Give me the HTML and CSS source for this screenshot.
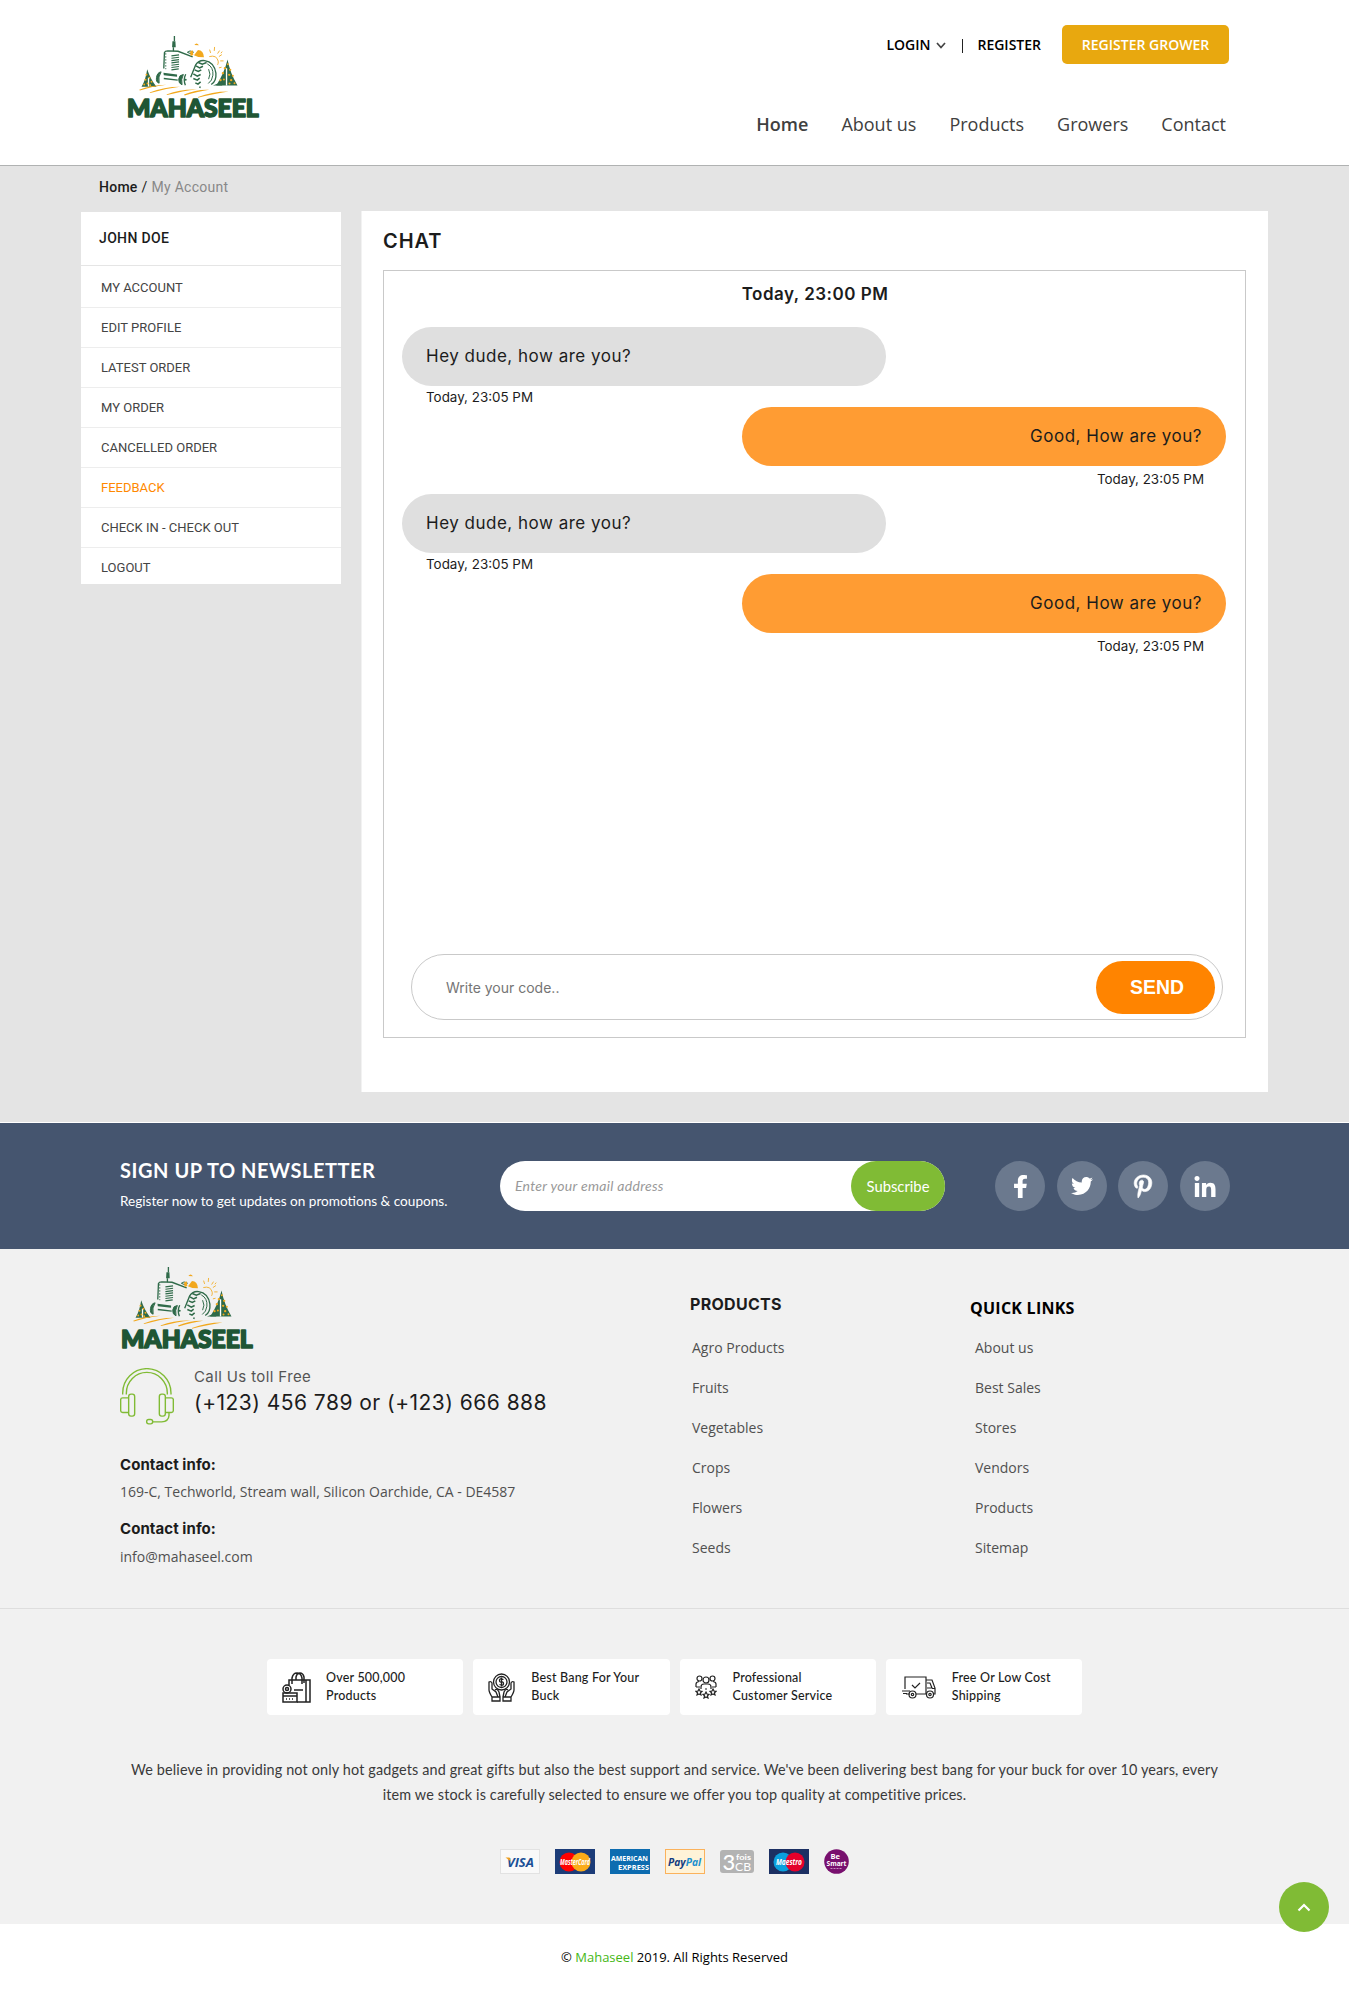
FILE: index.html
```html
<!DOCTYPE html>
<html lang="en">
<head>
<meta charset="utf-8">
<title>Mahaseel - Chat</title>
<link rel="stylesheet" href="styles.css">
</head>
<body>
<svg class="sprite" aria-hidden="true">
  <symbol id="logo" viewBox="168 108 402 250">
    <g fill="none" stroke="#2f6a49" stroke-width="3">
      <path d="M313 108v16M310 142v12" stroke-width="4"/>
      <path d="M281 206l2-48q2-5 10-5l31 1 44 17" stroke-width="4"/>
      <path d="M287 160v48" stroke-dasharray="4 5"/>
      <path d="M304 168l23-3M304 175l23-3M304 182l23-3M304 189l23-3M304 196l23-3M304 203l23-3M304 210l22-3" stroke-width="3.500"/>
      <path d="M281 236l42 5" stroke-width="4"/>
      <path d="M273 216q-12 2-14 17t8 17q-4-20 6-34zM340 224q-13 1-14 14t10 17q-4-17 4-31z" fill="#2f6a49"/>
      <path d="M347 223q-8 16-1 33M362 232l15-37q9-15 27-13 29 4 34 38 2 24-14 34" stroke-width="4"/>
      <path d="M412 192q19 10 17 34-2 17-14 25M416 208q8 15 0 30" stroke-width="3"/>
      <path d="M385 188l12 5 13-5M378 198l11 6 10-5M374 210l11 5 9-5M370 222l12 7 10-5M370 236l12 5 7-6M376 249l8 4 8-7M388 261l4 2" stroke-width="4.500"/>
      <path d="M352 157l8-4 10 3-4 7z"/>
    </g>
    <g fill="#2f6a49">
      <path d="M307 124h9l1 18h-11zM280 219l41 5v7l-40-5zM231 208q-4 30-17 53h45q-18-23-28-53zM473 179q-10 42-34 78h64q-22-36-30-78z"/>
      <path d="M429 257l28-11v11z"/><circle cx="347" cy="240" r="3"/>
    </g>
    <path d="M235 234v26M470 205v52" stroke="#fff" stroke-width="4"/>
    <g fill="#f2a81d">
      <path d="M373 135q7-10 14 1zM360 155l8-4 2 14-8 3zM384 150q17 1 18 22l-17-1-13-5z"/>
      <circle cx="229" cy="225" r="3"/><circle cx="238" cy="234" r="3"/><circle cx="226" cy="240" r="3"/><circle cx="244" cy="246" r="3"/><circle cx="222" cy="254" r="3"/><circle cx="240" cy="256" r="3"/><circle cx="232" cy="251" r="3"/>
      <circle cx="474" cy="193" r="3"/><circle cx="465" cy="205" r="3.500"/><circle cx="481" cy="210" r="3.500"/><circle cx="459" cy="220" r="3.500"/><circle cx="478" cy="225" r="3.500"/><circle cx="489" cy="228" r="3"/><circle cx="452" cy="241" r="3.500"/><circle cx="484" cy="241" r="3.500"/><circle cx="494" cy="250" r="3"/><circle cx="462" cy="239" r="3"/><circle cx="479" cy="251" r="3"/>
      <path d="M207 270q32-14 82-15-38 4-80 17zM238 278q44-17 92-17-44 5-90 19zM289 284q44-17 92-15-42 4-90 17zM342 284q38-16 76-14-32 5-74 17zM384 292q40-17 92-17-52 8-92 19z"/>
    </g>
    <path d="M418 170q22-6 27 14 1 6-2 11M419 149l3 10M434 141l-1 12M449 152l-6 9M456 164l-9 6M461 183h-10M457 155l-4 5M447 204l8-2" fill="none" stroke="#f2b43c" stroke-width="3"/>
    <text x="170" y="352" textLength="397" lengthAdjust="spacingAndGlyphs" class="logo-word">MAHASEEL</text>
  </symbol>
</svg>

<header class="header">
  <svg class="logo"><use href="#logo"/></svg>
  <div class="header-side">
    <div class="account-bar">
      <a class="account-link">LOGIN</a>
      <svg class="caret" viewBox="0 0 10 7"><path d="M1 1l4 4.500 4-4.500" fill="none" stroke="#444" stroke-width="1.700"/></svg>
      <span class="account-sep"></span>
      <a class="account-link">REGISTER</a>
      <a class="grower-btn">REGISTER GROWER</a>
    </div>
    <nav class="nav"><a class="nav-active">Home</a><a>About us</a><a>Products</a><a>Growers</a><a>Contact</a></nav>
  </div>
</header>

<main class="page">
  <div class="breadcrumb"><b>Home</b><span class="slash">/</span><span class="crumb">My Account</span></div>
  <div class="columns">
    <aside class="sidebar">
      <h2 class="sidebar-name">JOHN DOE</h2>
      <ul class="menu">
        <li>MY ACCOUNT</li><li>EDIT PROFILE</li><li>LATEST ORDER</li><li>MY ORDER</li><li>CANCELLED ORDER</li><li class="menu-active">FEEDBACK</li><li>CHECK IN - CHECK OUT</li><li>LOGOUT</li>
      </ul>
    </aside>
    <section class="panel">
      <h1 class="panel-title">CHAT</h1>
      <div class="chat">
        <h3 class="chat-day">Today, 23:00 PM</h3>
        <div class="msg"><p class="bubble">Hey dude, how are you?</p><p class="time">Today, 23:05 PM</p></div>
        <div class="msg msg-own"><p class="bubble">Good, How are you?</p><p class="time">Today, 23:05 PM</p></div>
        <div class="msg"><p class="bubble">Hey dude, how are you?</p><p class="time">Today, 23:05 PM</p></div>
        <div class="msg msg-own"><p class="bubble">Good, How are you?</p><p class="time">Today, 23:05 PM</p></div>
        <div class="composer"><span class="composer-hint">Write your code..</span><button class="send">SEND</button></div>
      </div>
    </section>
  </div>
</main>

<section class="newsletter">
  <div class="news-text">
    <h2 class="news-title">SIGN UP TO NEWSLETTER</h2>
    <p class="news-sub">Register now to get updates on promotions &amp; coupons.</p>
  </div>
  <div class="news-form"><span class="news-hint">Enter your email address</span><button class="subscribe">Subscribe</button></div>
  <div class="social">
    <a><svg width="13" height="23" viewBox="22 0 276 512" preserveAspectRatio="none"><path d="M279.140 288l14.220-92.660h-88.910v-60.130c0-25.350 12.420-50.060 52.240-50.060h40.420V6.260S260.430 0 225.360 0c-73.220 0-121.080 44.380-121.080 124.720v70.620H22.890V288h81.390v224h100.170V288z"/></svg></a>
    <a><svg width="22" height="18" viewBox="0 48 512 416"><path d="M459.370 151.716c.325 4.548.325 9.097.325 13.645 0 138.720-105.583 298.558-298.558 298.558-59.452 0-114.680-17.219-161.137-47.106 8.447.974 16.568 1.299 25.340 1.299 49.055 0 94.213-16.568 130.274-44.832-46.132-.975-84.792-31.188-98.112-72.772 6.498.974 12.995 1.624 19.818 1.624 9.421 0 18.843-1.300 27.614-3.573-48.081-9.747-84.143-51.980-84.143-102.985v-1.299c13.969 7.797 30.214 12.670 47.431 13.319-28.264-18.843-46.781-51.005-46.781-87.391 0-19.492 5.197-37.360 14.294-52.954 51.655 63.675 129.300 105.258 216.365 109.807-1.624-7.797-2.599-15.918-2.599-24.040 0-57.828 46.782-104.934 104.934-104.934 30.213 0 57.502 12.670 76.670 33.137 23.715-4.548 46.456-13.320 66.599-25.340-7.798 24.366-24.366 44.833-46.132 57.827 21.117-2.273 41.584-8.122 60.426-16.243-14.292 20.791-32.161 39.308-52.628 54.253z"/></svg></a>
    <a><svg width="18" height="23" viewBox="0 6 384 500"><path d="M204 6.500C101.400 6.500 0 74.900 0 185.600 0 256 39.600 296 63.600 296c9.900 0 15.600-27.600 15.600-35.400 0-9.300-23.700-29.100-23.700-67.800 0-80.400 61.200-137.400 140.400-137.400 68.100 0 118.500 38.700 118.500 109.800 0 53.100-21.300 152.700-90.300 152.700-24.900 0-46.200-18-46.200-43.800 0-37.800 26.400-74.400 26.400-113.400 0-66.200-93.900-54.200-93.900 25.800 0 16.800 2.100 35.400 9.600 50.700-13.800 59.400-42 147.900-42 209.100 0 18.900 2.700 37.500 4.500 56.400 3.400 3.800 1.700 3.400 6.900 1.500 50.400-69 48.600-82.500 71.400-172.800 12.300 23.400 44.100 36 69.300 36 106.200 0 153.900-103.500 153.900-196.800C384 71.300 298.200 6.500 204 6.500z" stroke="#fff" stroke-width="14"/></svg></a>
    <a><svg width="22" height="21" viewBox="0 0 448 448"><path d="M100.280 448H7.400V148.900h92.880zM53.790 108.100C24.090 108.100 0 83.500 0 53.800a53.790 53.790 0 0 1 107.580 0c0 29.700-24.100 54.300-53.790 54.300zM447.900 448h-92.680V302.400c0-34.700-.7-79.200-48.290-79.200-48.290 0-55.690 37.700-55.690 76.700V448h-92.780V148.900h89.080v40.800h1.300c12.400-23.500 42.690-48.300 87.880-48.300 94 0 111.280 61.900 111.280 142.300V448z"/></svg></a>
  </div>
</section>

<footer class="footer">
  <div class="footer-top">
    <div class="footer-about">
      <svg class="logo"><use href="#logo"/></svg>
      <div class="hotline">
        <svg class="headset" viewBox="60 353 162 170"><g fill="none" stroke="#80bb35" stroke-width="4.200"><path d="M68 432v-4a72 73 0 0 1 145 0v4M79 432v-4a61 62 0 0 1 123 0v4"/><rect x="86" y="431" width="18" height="66" rx="7"/><rect x="178" y="431" width="18" height="66" rx="7"/><path d="M86 442H68q-6 0-6 6v32q0 6 6 6h18M196 442h18q6 0 6 6v32q0 6-6 6h-18M207 487v8q-1 18-22 19h-27"/><rect x="140" y="507" width="18" height="13" rx="6"/></g></svg>
        <div><p class="hotline-label">Call Us toll Free</p><p class="hotline-number">(+123) 456 789 or (+123) 666 888</p></div>
      </div>
      <h4 class="info-title">Contact info:</h4>
      <p class="info-text">169-C, Techworld, Stream wall, Silicon Oarchide, CA - DE4587</p>
      <h4 class="info-title info-title-next">Contact info:</h4>
      <p class="info-text info-mail">info@mahaseel.com</p>
    </div>
    <div class="footer-col">
      <h3 class="col-title">PRODUCTS</h3>
      <ul class="links"><li>Agro Products</li><li>Fruits</li><li>Vegetables</li><li>Crops</li><li>Flowers</li><li>Seeds</li></ul>
    </div>
    <div class="footer-col footer-quick">
      <h3 class="col-title">QUICK LINKS</h3>
      <ul class="links"><li>About us</li><li>Best Sales</li><li>Stores</li><li>Vendors</li><li>Products</li><li>Sitemap</li></ul>
    </div>
  </div>
  <div class="features">
    <div class="feature f1"><svg width="29" height="31" viewBox="0 0 29 31"><g fill="none" stroke="#222" stroke-width="1.500"><path d="M7 13V8h21v22H15M24 8v22M10 12V6q1-5 5-5t5 5v6M14 8V5q1-4 4-4t4 4v6M12 18h9"/><path d="M1 21h14v9H1zM1 24h14" /><circle cx="5" cy="17" r="4"/><circle cx="5" cy="17" r="1.500"/><path d="M7 27h1M10 27h1M4 27h1"/></g></svg><p>Over 500,000<br>Products</p></div>
    <div class="feature f2"><svg width="27" height="29" viewBox="0 0 27 29"><g fill="none" stroke="#222" stroke-width="1.300"><circle cx="13.500" cy="9" r="8"/><circle cx="13.500" cy="9" r="5.500"/><path d="M15.500 6.500q-4-1.500-4 .8t2 1.700 2 1.800-4 .7M13.500 4.500v9M4 24q-3-5-3-7V9q2-1 3 1v6l4 3 2 5M7 17q2-2 4 2l1 5M23 24q3-5 3-7V9q-2-1-3 1v6l-4 3-2 5M20 17q-2-2-4 2l-1 5M4 24h8v4H4zM15 24h8v4h-8z"/></g></svg><p>Best Bang For Your<br>Buck</p></div>
    <div class="feature f3"><svg width="22" height="24" viewBox="0 0 22 24"><g fill="none" stroke="#222" stroke-width="1.200"><circle cx="4.500" cy="3.500" r="2.500"/><circle cx="17.500" cy="3.500" r="2.500"/><circle cx="11" cy="5" r="3"/><path d="M1 12V9q0-2 3-2.500M21 12V9q0-2-3-2.500M6 14v-2q0-3 3-3h4q3 0 3 3v2M1 12h4M17 12h4M10 14h2"/><path d="M4 14l1 2 2 .3-1.500 1.500.5 2.200-2-1-2 1 .5-2.200L1 16.300l2-.3zM18 14l1 2 2 .3-1.500 1.500.5 2.200-2-1-2 1 .5-2.200-1.500-1.500 2-.3zM11 17l1 2 2 .3-1.500 1.500.5 2.200-2-1-2 1 .5-2.200L8 19.300l2-.3z"/></g></svg><p>Professional<br>Customer Service</p></div>
    <div class="feature f4"><svg width="35" height="23" viewBox="0 0 35 23"><g fill="none" stroke="#222" stroke-width="1.200"><path d="M3 13V1h21v17H14M8 18H4M24 4h6l3 8v6h-2M25 7h3l2 5h-5M0 15h8M1 17.500h4M33 12.500h-3M10 9l3 3 5-5"/><circle cx="10.500" cy="18.500" r="3.500"/><circle cx="28" cy="18.500" r="3.500"/><circle cx="10.500" cy="18.500" r="1.200"/><circle cx="28" cy="18.500" r="1.200"/></g></svg><p>Free Or Low Cost<br>Shipping</p></div>
  </div>
  <p class="pitch">We believe in providing not only hot gadgets and great gifts but also the best support and service. We've been delivering best bang for your buck for over 10 years, every<br>item we stock is carefully selected to ensure we offer you top quality at competitive prices.</p>
  <div class="payments">
    <svg width="40" height="25" viewBox="0 0 40 25"><rect x=".5" y=".5" width="39" height="24" fill="#f9f9f9" stroke="#e2e2e2"/><text x="7" y="17.500" class="pay visa" textLength="27" lengthAdjust="spacingAndGlyphs">VISA</text><path d="M5.500 8.500h4l1.500 4z" fill="#f2a11d"/></svg>
    <svg width="40" height="25" viewBox="0 0 40 25"><rect width="40" height="25" fill="#1c3c78"/><circle cx="14" cy="13" r="9.500" fill="#f00"/><circle cx="26" cy="13" r="9.500" fill="#fbab18"/><text x="5" y="16" class="pay card-name" textLength="30" lengthAdjust="spacingAndGlyphs">MasterCard</text></svg>
    <svg width="40" height="25" viewBox="0 0 40 25"><rect width="40" height="25" fill="#0d6cb0"/><text x="1" y="12" class="pay amex" textLength="37" lengthAdjust="spacingAndGlyphs">AMERICAN</text><text x="8" y="20.500" class="pay amex" textLength="31" lengthAdjust="spacingAndGlyphs">EXPRESS</text></svg>
    <svg width="40" height="25" viewBox="0 0 40 25"><rect x=".5" y=".5" width="39" height="24" fill="#fff3d8" stroke="#fbb25c"/><text x="3" y="17" class="pay paypal" textLength="33" lengthAdjust="spacingAndGlyphs">Pay<tspan fill="#1c90cf">Pal</tspan></text></svg>
    <svg width="34" height="25" viewBox="0 0 34 25"><rect y="1" width="34" height="23" rx="3" fill="#b3b3b3"/><text x="2.500" y="20.500" class="pay fois-three">3</text><text x="16" y="10.500" class="pay fois" textLength="15" lengthAdjust="spacingAndGlyphs">fois</text><text x="15" y="21.500" class="pay fois-cb" textLength="16" lengthAdjust="spacingAndGlyphs">CB</text></svg>
    <svg width="40" height="25" viewBox="0 0 40 25"><rect width="40" height="25" fill="#1c3063"/><circle cx="14" cy="13" r="9.500" fill="#0aa0de"/><circle cx="26" cy="13" r="9.500" fill="#e4002b"/><text x="7" y="16" class="pay card-name" textLength="26" lengthAdjust="spacingAndGlyphs">Maestro</text></svg>
    <svg width="25" height="25" viewBox="0 0 25 25"><circle cx="12.500" cy="12.500" r="12.300" fill="#78106e"/><text x="6.500" y="10" class="pay smart" textLength="9.500" lengthAdjust="spacingAndGlyphs">Be</text><text x="2.500" y="17" class="pay smart" textLength="20" lengthAdjust="spacingAndGlyphs">Smart</text><path d="M6.500 19.500h12" stroke="#c98cc4" stroke-dasharray="2 1"/></svg>
  </div>
</footer>
<div class="copyright">© <a>Mahaseel</a> 2019. All Rights Reserved</div>
<a class="to-top"><svg width="14" height="9" viewBox="0 0 14 9"><path d="M1.500 7.500L7 2l5.500 5.500" fill="none" stroke="#fff" stroke-width="2.200"/></svg></a>
</body>
</html>
```
FILE: styles.css
```css
* { box-sizing: border-box; }
body { margin: 0; background: #fff; font-family: "Open Sans", sans-serif; color: #1c1c1c; }
h1, h2, h3, h4, p, ul { margin: 0; padding: 0; }
ul { list-style: none; }
button { border: 0; padding: 0; }
.sprite { position: absolute; width: 0; height: 0; }
.logo { display: block; width: 134px; height: 83px; }
.logo-word { font: 900 72px Lato, sans-serif; fill: #1f5635; stroke: #1f5635; stroke-width: 5px; stroke-linejoin: round; }

.header { display: flex; justify-content: space-between; height: 166px; padding: 0 120px 0 126px; border-bottom: 1px solid #b0b2b2; }
.header .logo { margin-top: 36px; }
.header-side { display: flex; flex-direction: column; align-items: flex-end; padding-top: 25px; }
.account-bar { display: flex; align-items: center; height: 39px; }
.account-link { font-size: 14px; font-weight: 600; line-height: 39px; color: #000; }
.caret { width: 10px; height: 7px; margin: 2px 16px 0 6px; }
.account-sep { width: 1px; height: 14px; margin: 2px 14px 0 0; background: #222; }
.grower-btn { width: 167px; margin-left: 21px; border-radius: 5px; background: #e8a80f; color: #fff; font-size: 14px; font-weight: 600; line-height: 39px; text-align: center; }
.nav { display: flex; gap: 33px; margin: 48px 3px 0 0; font-size: 18px; line-height: 24px; color: #404040; }
.nav-active { font-weight: 600; }

.page { background: #e4e4e4; height: 956px; padding: 11px 81px 0; }
.breadcrumb { display: flex; padding-left: 18px; font: 14px/20px Roboto, sans-serif; letter-spacing: .25px; }
.breadcrumb b { font-weight: 500; }
.slash { margin: 0 4px; }
.crumb { color: #888; }
.columns { display: grid; grid-template-columns: 260px 907px; column-gap: 20px; align-items: start; margin-top: 14px; }
.sidebar { margin-top: 1px; background: #fff; font-family: Roboto, sans-serif; }
.sidebar-name { height: 54px; padding-left: 18px; border-bottom: 1px solid #e5e5e5; font-size: 14px; font-weight: 500; line-height: 53px; letter-spacing: .35px; }
.menu { padding-top: 2px; }
.menu li { height: 40px; padding-left: 20px; border-bottom: 1px solid #ededed; font-size: 13px; line-height: 39px; color: #444; }
.menu li:last-child { height: 36px; border: 0; }
.menu .menu-active { color: #ff8800; }
.panel { height: 881px; padding: 18px 22px; border-left: 1px solid #f2f2f2; background: #fff; }
.panel-title { margin-left: -1px; font: 600 20px/24px Inter, sans-serif; letter-spacing: .9px; }
.chat { display: flex; flex-direction: column; width: 863px; height: 768px; margin: 17px 0 0 -1px; padding: 11px 19px 17px 18px; border: 1px solid #c9c9c9; font-family: Inter, sans-serif; }
.chat-day { margin-bottom: 21px; padding-left: 2px; font-size: 17px; font-weight: 600; line-height: 24px; letter-spacing: .5px; text-align: center; }
.msg { width: 484px; }
.bubble { height: 59px; padding: 0 24px; border-radius: 30px; background: #dfdfdf; font-size: 17px; line-height: 58px; letter-spacing: .5px; }
.time { padding: 1px 24px 0; font-size: 13.4px; line-height: 20px; }
.msg-own { align-self: flex-end; margin-bottom: 5px; text-align: right; }
.msg-own .bubble { background: #ff9c33; }
.msg-own .time { padding: 3px 22px 0; }
.composer { display: flex; justify-content: space-between; align-items: center; height: 66px; margin: auto 3px 0 9px; padding: 0 7px 0 34px; border: 1px solid #c9c9c9; border-radius: 33px; }
.composer-hint { font-size: 14px; color: #757575; }
.send { width: 119px; height: 53px; padding-left: 3px; border-radius: 27px; background: #ff8400; color: #fff; font: bold 19.4px "Liberation Sans", sans-serif; }

.newsletter { display: flex; height: 126px; margin-top: 1px; padding-left: 120px; background: #45556f; color: #fff; font-family: Lato, sans-serif; }
.news-text { width: 380px; padding-top: 35px; }
.news-title { font-size: 20px; font-weight: 700; line-height: 24px; letter-spacing: .54px; }
.news-sub { margin-top: 9px; font-size: 13.6px; line-height: 20px; }
.news-form { display: flex; justify-content: space-between; width: 445px; height: 50px; margin-top: 38px; border-radius: 25px; background: #fff; }
.news-hint { padding-left: 15px; font-size: 14px; font-style: italic; line-height: 49px; letter-spacing: .3px; color: #999; }
.subscribe { width: 94px; border-radius: 25px; background: #80bb35; color: #fff; font: 14.8px Lato, sans-serif; }
.social { display: flex; justify-content: space-between; width: 235px; height: 50px; margin: 38px 0 0 50px; }
.social a { display: flex; justify-content: center; align-items: center; width: 50px; border-radius: 50%; background: #6b798e; }
.social svg { fill: #fff; overflow: visible; }

.footer { height: 675px; background: #f1f1f1; }
.footer-top { display: grid; grid-template-columns: 570px 280px 1fr; height: 360px; padding-left: 120px; border-bottom: 1px solid #dedede; }
.footer-about { padding-top: 18px; }
.hotline { display: flex; gap: 20px; height: 57px; margin-top: 17px; font-family: Inter, sans-serif; }
.headset { width: 54px; height: 57px; margin-top: 1px; }
.hotline-label { font-size: 15px; line-height: 20px; letter-spacing: .38px; color: #555; }
.hotline-number { margin-top: 2px; font-size: 21px; line-height: 28px; letter-spacing: .47px; }
.info-title { margin-top: 31px; font: 700 15px/20px Inter, sans-serif; letter-spacing: .07px; }
.info-title-next { margin-top: 17px; }
.info-text { margin-top: 7px; font-size: 14px; line-height: 20px; color: #505050; }
.info-mail { margin-top: 8px; }
.footer-col { padding-top: 45px; }
.col-title { font: 700 16px/20px Inter, sans-serif; letter-spacing: .3px; }
.links { margin-top: 14px; padding-left: 2px; font-size: 14px; line-height: 40px; color: #505050; }
.footer-quick { padding-top: 49px; }
.footer-quick .col-title { font: 700 16px/20px "Open Sans", sans-serif; letter-spacing: .25px; color: #000; }
.footer-quick .links { margin-top: 10px; padding-left: 5px; }
.features { display: grid; grid-template-columns: repeat(4, 1fr); gap: 10px; width: 815px; margin: 50px auto 0; }
.feature { display: flex; align-items: center; height: 56px; border-radius: 4px; background: #fff; font: 500 12.5px/18px Lato, sans-serif; letter-spacing: .2px; }
.feature svg { flex: none; }
.f1 { gap: 15px; padding-left: 15px; }
.f2 { gap: 16px; padding-left: 15px; }
.f3 { gap: 16px; padding-left: 15px; }
.f4 { gap: 15px; padding-left: 16px; }
.pitch { margin-top: 42px; font: 14.4px/25px Lato, sans-serif; letter-spacing: .15px; color: #3a3a3a; text-align: center; white-space: nowrap; }
.payments { display: flex; gap: 15px; margin: 42px 0 0 500px; }
.pay { font-family: "Open Sans", sans-serif; font-weight: 700; font-style: italic; fill: #fff; }
.visa { font-size: 13px; fill: #1b4f96; }
.card-name { font-size: 8px; }
.amex { font-size: 7px; font-style: normal; }
.paypal { font-size: 11px; fill: #143b80; }
.fois-three { font: 500 22px Lato, sans-serif; }
.fois { font: 700 8px Lato, sans-serif; }
.fois-cb { font: 400 12px Lato, sans-serif; }
.smart { font-size: 7px; font-style: normal; }
.copyright { padding-top: 23px; font-size: 13px; line-height: 20px; text-align: center; color: #000; }
.copyright a { color: #45b715; }
.to-top { position: absolute; left: 1279px; top: 1882px; display: flex; justify-content: center; align-items: center; width: 50px; height: 50px; border-radius: 50%; background: #80bb35; }
```
